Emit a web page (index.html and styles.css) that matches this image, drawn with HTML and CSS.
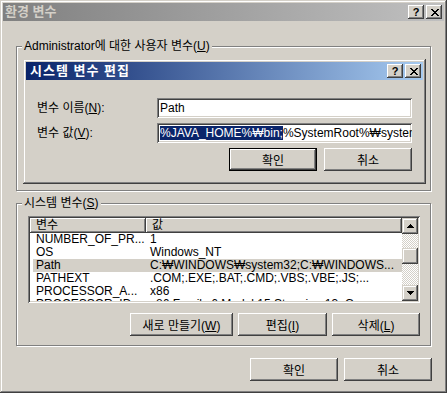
FILE: index.html
```html
<!DOCTYPE html>
<html lang="ko">
<head>
  <meta charset="UTF-8" />
  <title>환경 변수</title>
  <link rel="stylesheet" href="styles.css">
</head>
<body>

  <div class="window">
    <div class="titlebar inactive">
      <span class="title">환경 변수</span>
      <div class="caption-buttons">
        <span class="cap-btn help">?</span>
        <span class="cap-btn">
          <svg width="8" height="7" viewBox="0 0 8 7"><path d="M0 0h2v1h-2z M6 0h2v1h-2z M1 1h2v1h-2z M5 1h2v1h-2z M2 2h4v1h-4z M3 3h2v1h-2z M2 4h4v1h-4z M1 5h2v1h-2z M5 5h2v1h-2z M0 6h2v1h-2z M6 6h2v1h-2z" fill="#000"/></svg>
        </span>
      </div>
    </div>

    <div class="client">
      <div class="group user-group">
        <div class="group-label">Administrator에 대한 사용자 변수(<u>U</u>)</div>
      </div>

      <div class="group system-group">
        <div class="group-label">시스템 변수(<u>S</u>)</div>

        <div class="listview">
          <div class="list-body">
            <div class="list-header">
              <span>변수</span>
              <span>값</span>
            </div>
            <div class="list-row"><span>NUMBER_OF_PR...</span><span class="val">1</span></div>
            <div class="list-row"><span>OS</span><span class="val">Windows_NT</span></div>
            <div class="list-row selected"><span>Path</span><span class="val">C:₩WINDOWS₩system32;C:₩WINDOWS...</span></div>
            <div class="list-row"><span>PATHEXT</span><span class="val">.COM;.EXE;.BAT;.CMD;.VBS;.VBE;.JS;...</span></div>
            <div class="list-row"><span>PROCESSOR_A...</span><span class="val">x86</span></div>
            <div class="list-row"><span>PROCESSOR_ID...</span><span class="val">x86 Family 6 Model 15 Stepping 13, Ge...</span></div>
          </div>
          <div class="scrollbar">
            <span class="scroll-btn">
              <svg width="7" height="4" viewBox="0 0 7 4"><path d="M3 0h1v1h-1z M2 1h3v1h-3z M1 2h5v1h-5z M0 3h7v1h-7z" fill="#000"/></svg>
            </span>
            <div class="scroll-track"><span class="scroll-thumb"></span></div>
            <span class="scroll-btn">
              <svg width="7" height="4" viewBox="0 0 7 4"><path d="M0 0h7v1h-7z M1 1h5v1h-5z M2 2h3v1h-3z M3 3h1v1h-1z" fill="#000"/></svg>
            </span>
          </div>
        </div>

        <div class="button-row">
          <button class="btn wide">새로 만들기(<u>W</u>)</button>
          <button class="btn mid">편집(<u>I</u>)</button>
          <button class="btn">삭제(<u>L</u>)</button>
        </div>
      </div>

      <div class="button-row dialog-buttons">
        <button class="btn">확인</button>
        <button class="btn">취소</button>
      </div>
    </div>

    <!-- modal edit dialog on top of the user variables group -->
    <div class="dialog">
      <div class="titlebar active">
        <span class="title spaced">시스템 변수 편집</span>
        <div class="caption-buttons">
          <span class="cap-btn help">?</span>
          <span class="cap-btn">
            <svg width="8" height="7" viewBox="0 0 8 7"><path d="M0 0h2v1h-2z M6 0h2v1h-2z M1 1h2v1h-2z M5 1h2v1h-2z M2 2h4v1h-4z M3 3h2v1h-2z M2 4h4v1h-4z M1 5h2v1h-2z M5 5h2v1h-2z M0 6h2v1h-2z M6 6h2v1h-2z" fill="#000"/></svg>
          </span>
        </div>
      </div>

      <div class="dialog-body">
        <div class="form">
          <label>변수 이름(<u>N</u>):</label>
          <div class="edit">Path</div>
          <label>변수 값(<u>V</u>):</label>
          <div class="edit"><span class="selection">%JAVA_HOME%₩bin;</span>%SystemRoot%₩system32;%SystemRoot%</div>
        </div>
        <div class="button-row">
          <button class="btn default">확인</button>
          <button class="btn">취소</button>
        </div>
      </div>
    </div>
  </div>

</body>
</html>
```

FILE: styles.css
```css
* {
  box-sizing: border-box;
}

body {
  margin: 0;
  background: #d4d0c8;
  font-family: "Liberation Sans", "Noto Sans CJK KR", sans-serif;
  font-size: 12px;
  color: #000;
}

u {
  text-decoration: underline;
  text-underline-offset: 1px;
}

/* classic window frame */
.window,
.dialog {
  padding: 3px;
  background: #d4d0c8;
  box-shadow: inset -1px -1px #404040, inset 1px 1px #d4d0c8,
    inset -2px -2px #808080, inset 2px 2px #fff;
}

.window {
  position: relative;
  width: 447px;
  height: 393px;
}

.titlebar {
  display: flex;
  align-items: center;
  justify-content: space-between;
  height: 18px;
  padding: 0 2px 0 2px;
}

.titlebar.inactive {
  background: linear-gradient(to right, #808080, #c0c0c0);
  color: #d4d0c8;
}

.titlebar.active {
  background: linear-gradient(to right, #0a246a, #a6caf0);
  color: #fff;
  padding-left: 4px;
}

.title {
  font-weight: bold;
  font-size: 13px;
  line-height: 18px;
  white-space: nowrap;
}

.title.spaced {
  letter-spacing: 1px;
}

.caption-buttons {
  display: flex;
  gap: 2px;
}

.cap-btn {
  display: flex;
  align-items: center;
  justify-content: center;
  width: 16px;
  height: 14px;
  background: #d4d0c8;
  color: #000;
  font: bold 11px "Liberation Sans", sans-serif;
  box-shadow: inset -1px -1px #404040, inset 1px 1px #fff,
    inset -2px -2px #808080, inset 2px 2px #d4d0c8;
}

.cap-btn svg {
  display: block;
  margin-left: 1px;
}

.client {
  padding: 0 12px 0 13px;
}

/* group boxes */
.group {
  margin-right: 1px;
  border: 1px solid #808080;
  box-shadow: inset 1px 1px #fff, 1px 1px #fff;
}

.group-label {
  width: max-content;
  margin: -8px 0 0 5px;
  padding: 0 2px;
  line-height: 14px;
  background: #d4d0c8;
  white-space: nowrap;
}

.user-group {
  height: 145px;
  margin-top: 25px;
}

.system-group {
  height: 143px;
  margin-top: 12px;
}

/* list view */
.listview {
  display: flex;
  height: 87px;
  margin: 6px 10px 0 11px;
  padding: 2px;
  background: #fff;
  box-shadow: inset 1px 1px #808080, inset -1px -1px #fff,
    inset 2px 2px #404040, inset -2px -2px #d4d0c8;
}

.list-body {
  flex: 1;
  overflow: hidden;
}

.list-header {
  display: grid;
  grid-template-columns: 116px 1fr;
  height: 15px;
}

.list-header span {
  padding-left: 6px;
  line-height: 14px;
  background: #d4d0c8;
  box-shadow: inset -1px -1px #404040, inset 1px 1px #fff,
    inset -2px -2px #808080;
}

.list-row {
  display: grid;
  grid-template-columns: 113px 1fr;
  height: 13px;
  margin-left: 3px;
  line-height: 13px;
  white-space: nowrap;
}

.list-row span {
  padding-left: 3px;
  overflow: hidden;
}

.list-row .val {
  padding-left: 4px;
}

.list-row.selected {
  background: #d4d0c8;
}

.scrollbar {
  display: flex;
  flex-direction: column;
  width: 16px;
  background: repeating-conic-gradient(#fff 0 25%, #d4d0c8 0 50%) 0 0 / 2px 2px;
}

.scroll-btn,
.scroll-thumb {
  display: flex;
  align-items: center;
  justify-content: center;
  width: 16px;
  height: 16px;
  background: #d4d0c8;
  box-shadow: inset -1px -1px #404040, inset 1px 1px #d4d0c8,
    inset -2px -2px #808080, inset 2px 2px #fff;
}

.scroll-track {
  flex: 1;
  padding-top: 14px;
}

/* buttons */
.button-row {
  display: flex;
  justify-content: flex-end;
  gap: 5px;
}

.system-group .button-row {
  margin: 10px 10px 0 11px;
}

.dialog-buttons {
  margin-top: 12px;
  gap: 6px;
}

.btn {
  width: 88px;
  height: 23px;
  padding: 0;
  border: none;
  background: #d4d0c8;
  font: inherit;
  color: #000;
  box-shadow: inset -1px -1px #404040, inset 1px 1px #fff,
    inset -2px -2px #808080, inset 2px 2px #d4d0c8;
}

.btn.wide {
  width: 103px;
}

.btn.mid {
  width: 89px;
}

.btn.default {
  box-shadow: inset 0 0 0 1px #000, inset -2px -2px #404040,
    inset 2px 2px #fff, inset -3px -3px #808080;
}

/* edit dialog */
.dialog {
  position: absolute;
  left: 23px;
  top: 59px;
  width: 403px;
  height: 125px;
}

.dialog-body {
  padding: 18px 11px 0 11px;
}

.form {
  display: grid;
  grid-template-columns: 120px 1fr;
  row-gap: 5px;
  align-items: center;
}

.form label {
  line-height: 16px;
  white-space: nowrap;
}

.edit {
  height: 20px;
  padding: 2px 3px;
  line-height: 16px;
  background: #fff;
  white-space: nowrap;
  overflow: hidden;
  box-shadow: inset 1px 1px #808080, inset -1px -1px #fff,
    inset 2px 2px #404040, inset -2px -2px #d4d0c8;
}

.selection {
  background: #0a246a;
  color: #fff;
}

.dialog .button-row {
  margin-top: 5px;
  gap: 7px;
}
```
